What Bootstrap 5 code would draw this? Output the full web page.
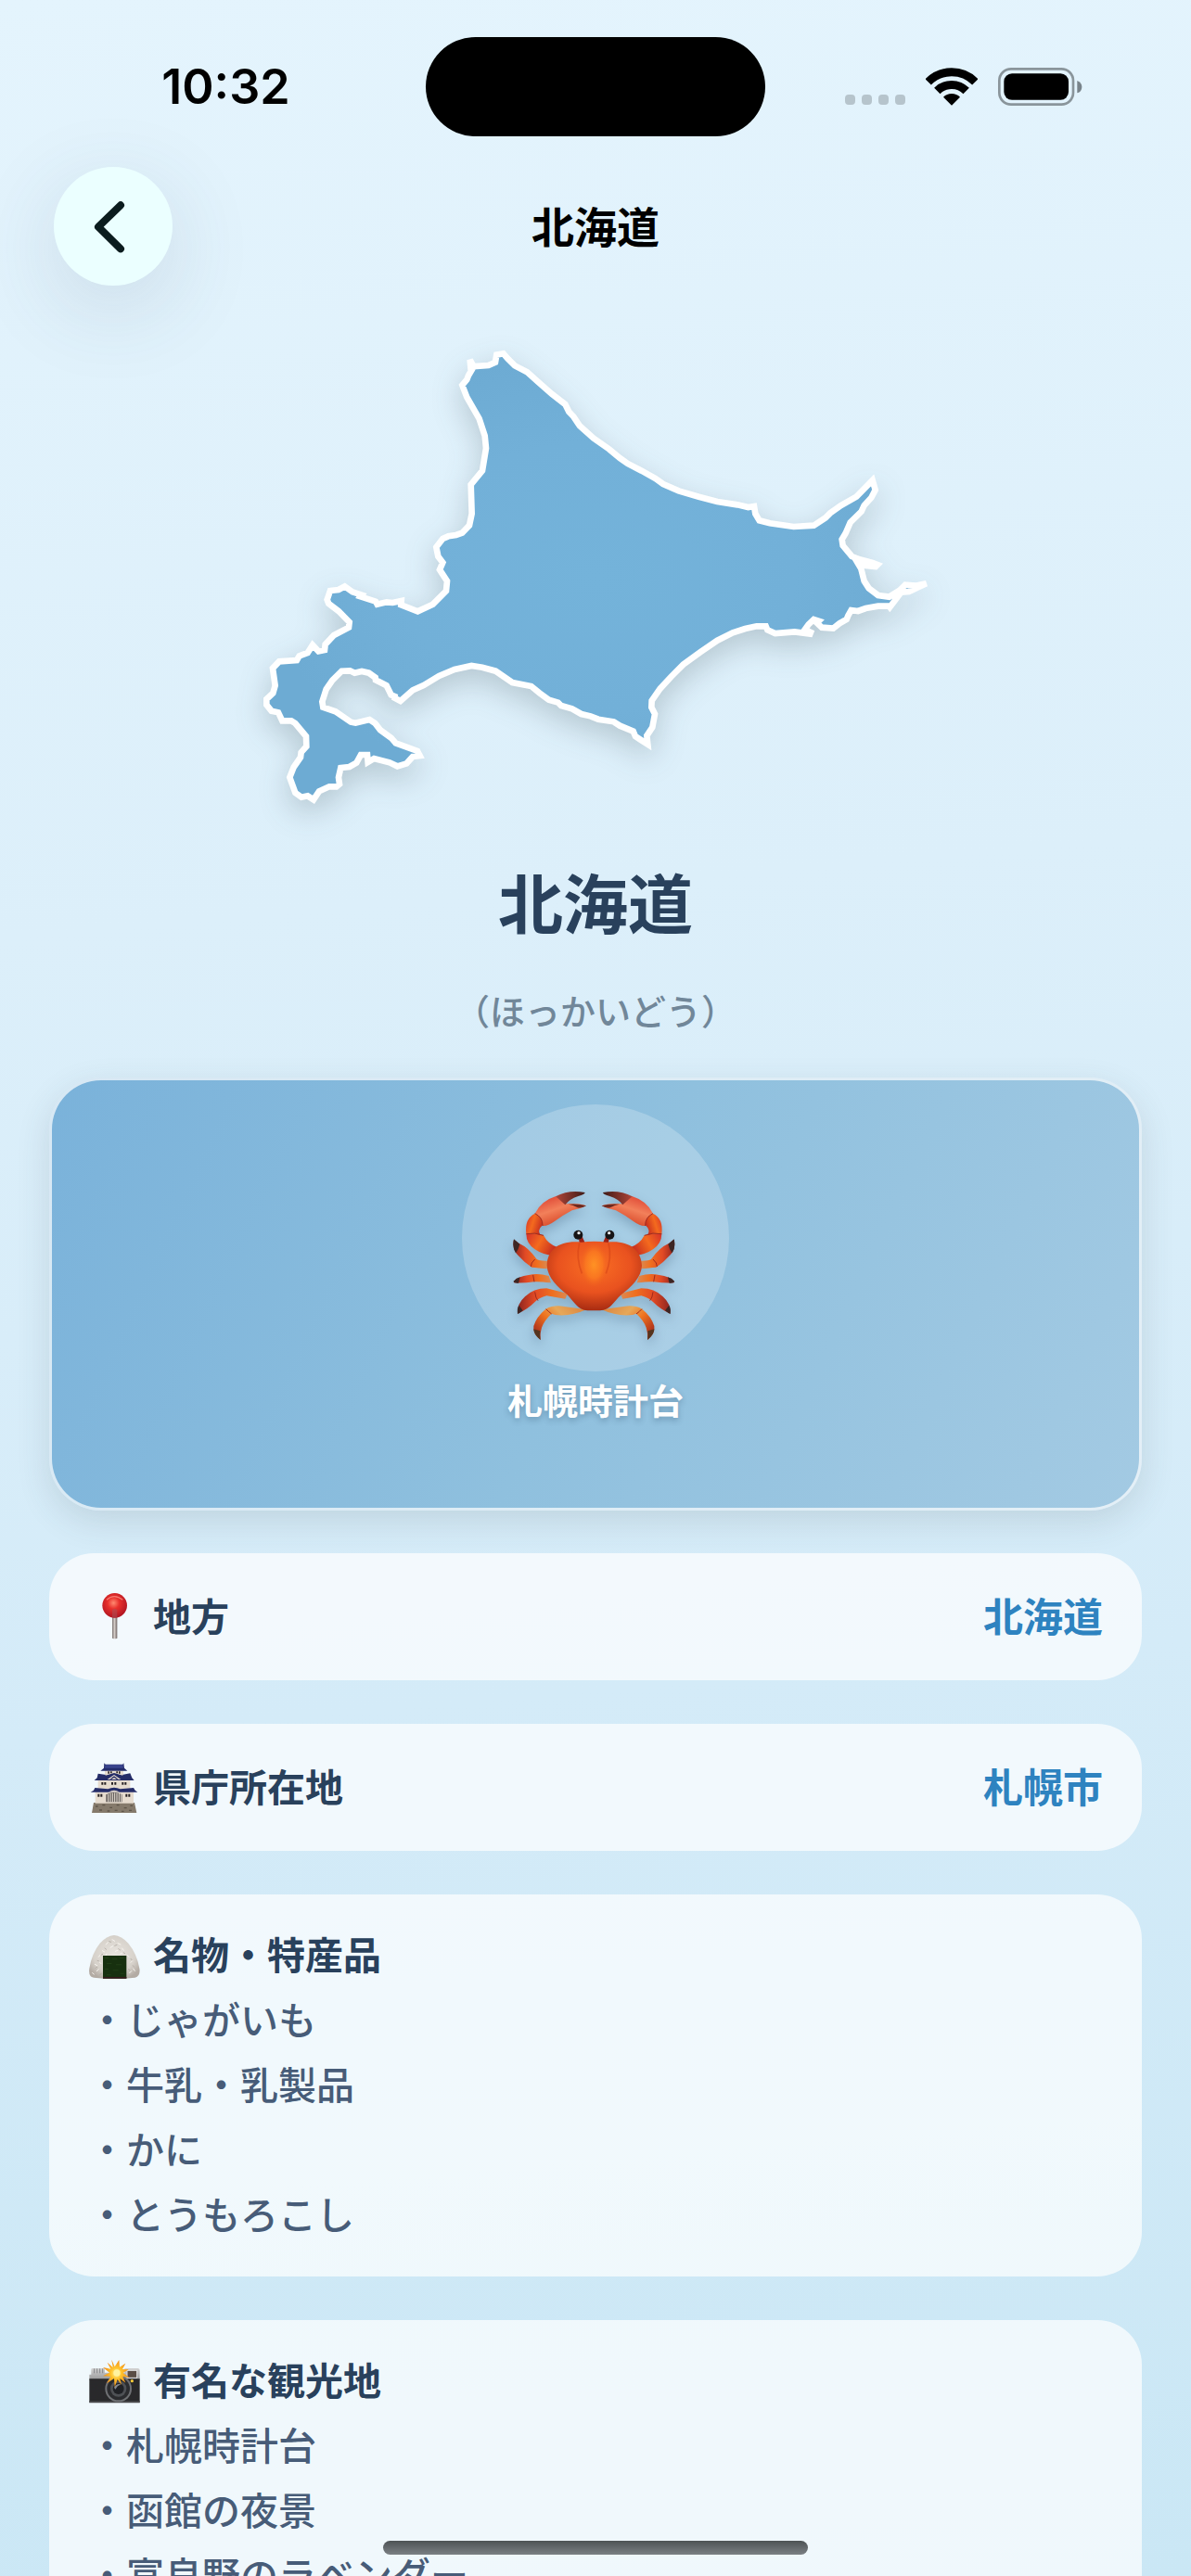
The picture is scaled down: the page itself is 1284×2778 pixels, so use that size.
<!DOCTYPE html>
<html lang="ja">
<head>
  <meta charset="UTF-8" />
  <meta name="viewport" content="width=device-width, initial-scale=1" />
  <title>北海道</title>
  <link href="https://cdn.jsdelivr.net/npm/bootstrap@5.3.0/dist/css/bootstrap.min.css" rel="stylesheet" />
  <style>
    body {
      font-family: "Noto Sans CJK JP", sans-serif;
      color: #29415c;
      background: linear-gradient(175deg, #e4f4fd 0%, #dceffa 35%, #d4ebf8 65%, #cae7f5 100%);
    }

    /* Status bar */
    .status-bar {
      padding-top: 40px;
      display: grid;
      grid-template-columns: 1fr 366px 1fr;
    }

    .clock {
      font-family: Inter, sans-serif;
      font-size: 52px;
      line-height: 56px;
      font-weight: 600;
      padding-left: 28px;
    }

    .island {
      height: 107px;
    }

    .status-icons {
      padding-right: 32px;
      gap: 22px;
    }

    .signal i {
      width: 11px;
      height: 11px;
      border-radius: 4px;
      background-color: #b6c4cc;
    }

    .signal {
      gap: 7px;
      padding-bottom: 1px;
    }

    /* Top navigation */
    .top-nav {
      margin-top: 33px;
      padding: 0 58px;
      display: grid;
      grid-template-columns: 128px 1fr 128px;
    }

    .back-btn {
      width: 128px;
      height: 128px;
      background-color: #ebffff;
      box-shadow: 0 24px 96px rgba(60, 80, 100, 0.14);
    }

    .nav-heading {
      font-size: 46px;
      line-height: 56px;
      font-weight: 600;
    }

    /* Content */
    .page-body {
      padding: 52px 53px 0;
    }

    .map-svg {
      width: 744px;
      max-width: 100%;
      overflow: visible;
      filter: drop-shadow(0 12px 16px rgba(40, 60, 70, 0.22));
    }

    .pref-name {
      margin-top: 50px;
      font-size: 70px;
      line-height: 84px;
      font-weight: 700;
    }

    .pref-kana {
      margin-top: 47px;
      margin-bottom: 45px;
      font-size: 38px;
      line-height: 56px;
      font-weight: 500;
      color: #718799;
    }

    .hero {
      min-height: 467px;
      padding-top: 26px;
      border: 3px solid rgba(255, 255, 255, 0.7);
      border-radius: 56px;
      background: linear-gradient(115deg, #7ab2da 0%, #8fc0de 50%, #a3cae3 100%) border-box;
      box-shadow: 0 12px 36px rgba(60, 70, 80, 0.14);
      color: #fff;
    }

    .hero-disc {
      width: 288px;
      height: 288px;
      background-color: rgba(255, 255, 255, 0.22);
    }

    .crab {
      filter: drop-shadow(0 6px 6px rgba(30, 60, 90, 0.25));
    }

    .hero-caption {
      font-size: 38px;
      line-height: 60px;
      font-weight: 600;
      text-shadow: 0 3px 6px rgba(30, 60, 90, 0.3);
    }

    .cards {
      margin-top: 46px;
      gap: 47px;
    }

    .info-card {
      padding: 28px 42px 34px;
      border-radius: 48px;
      background-color: rgba(255, 255, 255, 0.7);
      font-size: 41px;
      line-height: 70px;
    }

    .info-row {
      min-height: 137px;
    }

    .info-label {
      font-weight: 600;
      gap: 14px;
    }

    .info-label svg {
      margin-top: 6px;
    }

    .info-value {
      font-size: 43px;
      font-weight: 600;
      color: #2e83c0;
    }

    .info-list {
      color: #475c78;
      font-weight: 500;
    }

    .home-bar {
      left: 50%;
      bottom: 23px;
      width: 458px;
      height: 15px;
      transform: translateX(-50%);
      background: linear-gradient(#4d5355, #7b8084);
    }
  </style>
</head>
<body>

  <div class="vh-100 overflow-hidden position-relative">

    <!-- Status bar -->
    <header class="status-bar align-items-center text-black">
      <div class="text-center"><span class="clock">10:32</span></div>
      <div class="island rounded-pill bg-black"></div>
      <div class="status-icons d-flex justify-content-center align-items-end">
        <div class="signal d-flex"><i></i><i></i><i></i><i></i></div>
        <svg width="56" height="41" viewBox="0 0 168 123" fill="none" stroke="#000" aria-hidden="true">
          <path d="M8 46A107 107 0 0 1 160 46" stroke-width="27" />
          <path d="M37 75A66 66 0 0 1 131 75" stroke-width="27" />
          <path d="M57 95A38 38 0 0 1 111 95L84 122Z" fill="#000" stroke="none" />
        </svg>
        <svg width="91" height="41" viewBox="0 0 273 123" aria-hidden="true">
          <rect x="4" y="4" width="239" height="115" rx="38" fill="none" stroke="#8a959b" stroke-width="8" />
          <rect x="19" y="19" width="209" height="85" rx="26" />
          <path d="M256 42Q271 48 271 62Q271 77 256 82Z" fill="#78838a" />
        </svg>
      </div>
    </header>

    <!-- Navigation -->
    <nav class="top-nav align-items-center">
      <button type="button" class="back-btn btn border-0 rounded-circle p-0 d-flex align-items-center justify-content-center" aria-label="戻る">
        <svg width="128" height="128" viewBox="0 0 384 384" fill="none" stroke="#0b1c1e" stroke-width="24" stroke-linecap="round" stroke-linejoin="round">
          <path d="M216 124L144 194L216 265" />
        </svg>
      </button>
      <h1 class="nav-heading text-black text-center mb-0 pb-1">北海道</h1>
    </nav>

    <main class="page-body">

      <!-- Outline of Hokkaido -->
      <div class="text-center">
        <svg class="map-svg d-block mx-auto" viewBox="0 0 2232 1560" role="img" aria-label="北海道の地図">
          <defs>
            <radialGradient id="land" cx="0.5" cy="0.5" r="0.5">
              <stop offset="0" stop-color="#74b3da" />
              <stop offset="0.6" stop-color="#72b0d8" />
              <stop offset="1" stop-color="#6dabd3" />
            </radialGradient>
          </defs>
          <path fill="url(#land)" stroke="#fff" stroke-width="20" stroke-linejoin="miter" d="M722 106L710 84L712 106L770 102L792 92L796 68L818 64L832 80L855 103L895 124L930 155L975 195L1018 228L1030 252L1045 268L1065 298L1110 338L1160 373L1195 402L1220 420L1265 443L1310 468L1335 486L1385 508L1450 527L1510 543L1575 553L1610 561L1629 558L1633 582L1646 604L1680 613L1757 624L1822 620L1860 595L1875 580L1910 555L1960 527L2012 474L2021 505L2008 530L1985 555L1976 575L1940 610L1925 645L1913 665L1916 685L1945 720L1970 730L2012 741L2028 747L2022 753L1990 750L1962 738L1975 760L1985 800L2000 823L2030 846L2066 851L2100 830L2118 812L2150 815L2186 808L2155 822L2130 834L2104 836L2085 862L2068 884L2065 880L2030 881L1990 888L1965 897L1943 894L1933 912L1928 924L1905 937L1885 953L1848 950L1832 935L1838 929L1822 924L1805 940L1793 957L1812 966L1810 971L1760 964L1697 969L1672 958L1667 946L1637 946L1600 954L1560 967L1510 992L1455 1030L1400 1070L1360 1110L1325 1148L1298 1187L1297 1208L1308 1230L1300 1273L1282 1300L1285 1328L1260 1312L1245 1302L1238 1286L1195 1268L1175 1255L1125 1247L1100 1237L1070 1230L1040 1213L1005 1203L995 1193L965 1184L935 1162L908 1140L847 1128L793 1091L750 1079L715 1074L660 1086L610 1107L560 1137L525 1153L485 1188L460 1175L474 1176L455 1168L440 1138L405 1120L404 1112L383 1097L360 1092L337 1097L322 1090L295 1091L265 1121L245 1150L232 1190L235 1208L275 1222L325 1256L340 1259L385 1248L403 1260L420 1282L455 1307L470 1324L540 1350L548 1365L525 1368L505 1390L475 1399L450 1387L400 1374L380 1386L378 1362L357 1362L343 1388L320 1401L292 1404L285 1435L288 1457L278 1465L255 1465L222 1480L204 1507L185 1495L165 1499L145 1485L127 1435L140 1402L162 1370L164 1354L181 1335L180 1302L145 1260L132 1252L103 1252L90 1225L68 1220L52 1200L52 1182L73 1162L80 1138L72 1082L93 1060L150 1056L158 1042L185 1032L201 1007L220 1027L240 1023L242 1005L270 975L318 950L320 933L285 897L253 873L248 860L258 831L285 828L305 817L330 835L360 845L356 850L405 866L410 875L440 868L460 870L488 864L487 877L541 898L590 875L633 832L636 800L612 763L622 740L607 720L601 690L622 663L640 655L665 651L685 644L708 620L716 582L713 488L750 443L762 370L758 330L740 275L700 205L685 166L700 148L705 135Z" />
        </svg>
      </div>

      <h2 class="pref-name text-center mb-0">北海道</h2>
      <p class="pref-kana text-center">（ほっかいどう）</p>

      <!-- Landmark -->
      <section class="hero d-flex flex-column align-items-center">
        <div class="hero-disc rounded-circle">
          <svg class="crab" width="288" height="288" viewBox="54 93 864 864" role="img" aria-label="かに">
            <defs>
              <radialGradient id="shell" cx="0.5" cy="0.35" r="0.65">
                <stop offset="0" stop-color="#fa6f24" />
                <stop offset="0.6" stop-color="#e9521f" />
                <stop offset="1" stop-color="#a82c12" />
              </radialGradient>
              <radialGradient id="ridge">
                <stop offset="0" stop-color="#ff9224" />
                <stop offset="0.6" stop-color="#fb7a20" stop-opacity="0.8" />
                <stop offset="1" stop-color="#ee5e1c" stop-opacity="0" />
              </radialGradient>
              <linearGradient id="claw" x1="0" y1="0" x2="0.6" y2="1">
                <stop offset="0" stop-color="#d9352a" />
                <stop offset="0.5" stop-color="#f2805a" />
                <stop offset="1" stop-color="#d23a1c" />
              </linearGradient>
              <linearGradient id="joint" x1="0" y1="0" x2="1" y2="0.4">
                <stop offset="0" stop-color="#d4302a" />
                <stop offset="0.5" stop-color="#f46a1e" />
                <stop offset="1" stop-color="#c8301f" />
              </linearGradient>
              <linearGradient id="tip" x1="0" y1="0" x2="1" y2="0">
                <stop offset="0" stop-color="#b04538" />
                <stop offset="1" stop-color="#3f1a17" />
              </linearGradient>
              <linearGradient id="leg" x1="0" y1="0" x2="1" y2="0">
                <stop offset="0" stop-color="#8c2420" />
                <stop offset="0.35" stop-color="#e24a25" />
                <stop offset="0.7" stop-color="#f0701f" />
                <stop offset="1" stop-color="#d98a55" />
              </linearGradient>
              <linearGradient id="backleg" x1="0" y1="0.6" x2="1" y2="0">
                <stop offset="0" stop-color="#b4381c" />
                <stop offset="0.3" stop-color="#ef7420" />
                <stop offset="0.55" stop-color="#e6a85a" />
                <stop offset="1" stop-color="#d9803c" />
              </linearGradient>
              <g id="crab-half">
                <path fill="url(#leg)" d="M222 530Q215 560 234 580Q255 604 280 620Q300 622 332 625L330 599Q306 600 296 594Q270 556 238 542Z" />
                <path fill="#3d2624" d="M222 529Q216 556 228 574Q238 560 241 545Z" />
                <path fill="url(#leg)" d="M222 665Q235 650 270 645Q300 638 335 648L342 670Q300 665 288 667Q250 672 222 670Z" />
                <path fill="#3d2624" d="M220 666Q230 654 242 652L237 671Q225 672 220 666Z" />
                <path fill="url(#leg)" d="M234 770Q232 738 258 715Q285 688 328 688L396 705L388 722L328 712Q304 718 290 732Q264 758 234 770Z" />
                <path fill="#3d2624" d="M234 771Q232 752 238 743L251 760Q242 768 234 771Z" />
                <path fill="url(#backleg)" d="M308 855Q282 834 286 810Q295 780 325 755Q350 742 380 746L456 757Q406 780 356 774L344 770Q320 792 312 815Q305 835 308 855Z" />
                <path fill="#55351f" d="M308 855Q286 838 286 820L307 826Q305 842 308 855Z" />
                <path fill="url(#joint)" d="M262 512Q262 542 290 562Q316 580 350 582L364 556Q332 545 318 517Q290 508 262 512Z" />
                <path fill="url(#joint)" d="M262 512Q256 462 290 446Q316 456 316 482Q296 500 308 516Q285 508 262 512Z" />
                <path fill="url(#claw)" d="M290 446Q310 405 358 390L388 415Q430 412 456 421Q435 432 410 436Q380 452 355 470Q330 488 315 486Q316 456 290 446Z" />
                <path fill="url(#tip)" d="M357 391Q400 368 452 378Q452 384 430 390Q400 400 388 418Q375 406 357 391Z" />
                <path fill="#6d2a20" d="M398 416Q432 413 456 421Q440 430 428 427Q414 418 398 416Z" />
                <path fill="none" stroke="#a02a1c" stroke-width="3" d="M290 446Q316 458 315 486M262 512Q290 506 318 517M290 594Q276 606 277 618M284 645L288 667M290 700Q292 720 300 728M326 755Q332 762 344 771" />
                <path fill="#9c2218" d="M432 524L442 518L452 541L434 543Z" />
                <circle cx="430" cy="515" r="15" fill="#171415" />
                <circle cx="432" cy="509" r="5" fill="#e8e8e8" />
              </g>
            </defs>
            <use href="#crab-half" />
            <use href="#crab-half" transform="translate(962 0) scale(-1 1)" />
            <path fill="url(#shell)" d="M329 615C330 560 372 532 440 539Q481 534 524 539C590 532 634 560 636 615C634 655 600 684 570 708C545 730 535 759 500 760L460 760C430 759 415 730 394 708C365 684 331 655 329 615Z" />
            <ellipse cx="481" cy="612" rx="46" ry="74" fill="url(#ridge)" />
            <path fill="none" stroke="#cf3d14" stroke-width="5" opacity="0.5" d="M434 541Q422 590 442 640M528 541Q540 590 520 640" />
          </svg>
        </div>
        <div class="hero-caption">札幌時計台</div>
      </section>

      <div class="cards d-flex flex-column">

        <div class="info-card info-row d-flex justify-content-between align-items-center">
          <div class="info-label d-flex align-items-center">
            <!-- Round pushpin -->
            <svg width="56" height="56" viewBox="0 0 168 168" aria-hidden="true">
              <defs>
                <radialGradient id="pin" cx="0.45" cy="0.4" r="0.6">
                  <stop offset="0" stop-color="#ff8a70" />
                  <stop offset="0.4" stop-color="#e8302c" />
                  <stop offset="1" stop-color="#b01522" />
                </radialGradient>
                <linearGradient id="needle">
                  <stop offset="0" stop-color="#77706e" />
                  <stop offset="0.45" stop-color="#d6cfca" />
                  <stop offset="1" stop-color="#6d6260" />
                </linearGradient>
              </defs>
              <path fill="url(#needle)" d="M78 70H94V152Q86 156 78 152Z" />
              <circle cx="86" cy="46" r="40" fill="url(#pin)" />
              <path fill="#a3535a" opacity="0.5" d="M78 60Q86 54 94 60V85H78Z" />
              <path fill="none" stroke="#ff9d90" stroke-width="4" opacity="0.7" d="M60 28Q84 6 112 28" />
            </svg>
            地方
          </div>
          <div class="info-value">北海道</div>
        </div>

        <div class="info-card info-row d-flex justify-content-between align-items-center">
          <div class="info-label d-flex align-items-center">
            <!-- Castle -->
            <svg width="56" height="56" viewBox="0 0 168 168" aria-hidden="true">
              <path fill="#857a6b" d="M18 132H150L157 165H12Z" />
              <path fill="#5f5649" d="M24 142h8v4h-8zM46 138h9v4h-9zM70 146h8v4h-8zM92 138h9v4h-9zM116 147h9v4h-9zM136 140h8v4h-8zM36 154h9v4h-9zM62 157h8v4h-8zM86 155h9v4h-9zM108 158h8v4h-8zM132 155h9v4h-9z" />
              <path fill="#e6dccf" d="M23 97H147V134H23ZM32 56H136V90H32ZM54 28H114V50H54Z" />
              <path fill="#232c6b" d="M52 4L56 8H112L115 4L117 20L127 29H40L51 20Z" />
              <path fill="#39448c" d="M56 9H112L114 20H53Z" />
              <path fill="#252d68" d="M32 38L58 42L84 34L110 42L136 37L142 52L149 60H20L29 52Z" />
              <path fill="#e6dccf" d="M56 30H112V44L84 36L56 44ZM84 42L106 57H62Z" />
              <path fill="#232a62" d="M84 46L98 56H92L84 51L76 56H70Z" />
              <path fill="#252d68" d="M22 84L64 88Q84 78 104 88L147 84L152 92L160 98H8L18 92Z" />
              <path fill="#e0d6c9" d="M66 98Q84 86 102 98Z" />
              <path fill="#2a2426" d="M64 31h5v7h-5zM72 31h5v6h-5zM91 31h5v6h-5zM99 31h5v7h-5zM43 66h6v8h-6zM52 66h6v8h-6zM75 66h6v8h-6zM85 66h6v8h-6zM109 66h6v8h-6zM118 66h6v8h-6zM31 104h6v9h-6zM40 104h6v9h-6zM121 104h6v9h-6zM130 104h6v9h-6z" />
              <path fill="#655f5c" d="M58 106Q84 92 110 106V130H58Z" />
              <path fill="none" stroke="#e9e1d6" stroke-width="3" d="M65 104V130M72 102V130M79 101V130M86 100V130M93 101V130M100 102V130M107 104V130" />
            </svg>
            県庁所在地
          </div>
          <div class="info-value">札幌市</div>
        </div>

        <div class="info-card">
          <div class="info-label d-flex align-items-center">
            <!-- Rice ball -->
            <svg width="56" height="56" viewBox="0 0 168 168" aria-hidden="true">
              <defs>
                <radialGradient id="rice" cx="0.5" cy="0.45" r="0.6">
                  <stop offset="0" stop-color="#e9e5df" />
                  <stop offset="0.7" stop-color="#d6d1ca" />
                  <stop offset="1" stop-color="#b3aba3" />
                </radialGradient>
              </defs>
              <path fill="url(#rice)" d="M84 18Q108 20 130 44Q158 78 166 125Q170 150 152 155Q84 162 18 155Q0 152 4 125Q12 76 38 44Q60 20 84 18Z" />
              <path fill="none" stroke="#f7f4ef" stroke-width="3" stroke-linecap="round" d="M78 32l8 5M58 48l6-7M96 44l9 4M72 58l8-5M110 60l5 7M46 68l7 4M88 70l8-3M34 88l6-7M60 78l-4 7M126 82l6 6M22 112l7 4M36 104l6 6M28 134l6-6M138 106l6-6M146 126l5 7M134 140l6-6M14 140l5 4M104 78l7-3" />
              <path fill="none" stroke="#a8a098" stroke-width="2" stroke-linecap="round" d="M68 38l6 2M86 52l7-3M54 60l5 4M98 62l6 4M42 82l5-3M114 74l5 3M30 100l5 2M138 94l4 5M24 124l5-3M144 116l4 3M38 146l5-4M130 128l5 3" />
              <path fill="#17300f" d="M48 84H124V158H48Z" />
              <path fill="#26451a" opacity="0.7" d="M54 90h12v3h-12zM78 94h16v3h-16zM102 90h14v3h-14zM60 108h16v3h-16zM90 112h18v3h-18zM54 126h12v3h-12zM80 130h18v3h-18zM104 140h12v3h-12zM60 145h14v3h-14z" />
              <path fill="#33191a" d="M48 153H124V158H48Z" />
            </svg>
            名物・特産品
          </div>
          <ul class="info-list list-unstyled mb-0">
            <li>・じゃがいも</li>
            <li>・牛乳・乳製品</li>
            <li>・かに</li>
            <li>・とうもろこし</li>
          </ul>
        </div>

        <div class="info-card">
          <div class="info-label d-flex align-items-center">
            <!-- Camera with flash -->
            <svg width="56" height="56" viewBox="0 0 168 168" aria-hidden="true">
              <defs>
                <linearGradient id="metal" x1="0" y1="0" x2="0" y2="1">
                  <stop offset="0" stop-color="#d2d2d2" />
                  <stop offset="1" stop-color="#98999a" />
                </linearGradient>
                <radialGradient id="flash">
                  <stop offset="0" stop-color="#fff6a0" />
                  <stop offset="0.4" stop-color="#ffc42e" />
                  <stop offset="1" stop-color="#f28a12" />
                </radialGradient>
              </defs>
              <path fill="url(#metal)" d="M10 46Q10 42 15 42H54V56H118V42H160Q167 42 167 50V80H4V62H10Z" />
              <path fill="none" stroke="#84868a" stroke-width="3" d="M20 43V58M29 43V58M38 43V58M47 43V58" />
              <rect x="126" y="49" width="32" height="24" fill="#5a4d45" stroke="#e4e4e4" stroke-width="3" />
              <path fill="#29292b" d="M4 76H167V152H4Z" />
              <path fill="#4a4a4c" d="M4 148H167V154H4Z" />
              <circle cx="98" cy="108" r="43" fill="#6f7174" />
              <circle cx="98" cy="108" r="37" fill="#2b2c2f" />
              <circle cx="98" cy="108" r="26" fill="#4e5155" />
              <circle cx="98" cy="108" r="18" fill="#202226" />
              <path fill="#85898e" d="M84 104Q92 90 106 94Q94 98 88 110Z" />
              <circle cx="142" cy="83" r="5" fill="#f4c93a" />
              <path fill="url(#flash)" d="M76 14L86 37L100 15L102 38L121 26L111 45L131 46L113 57L134 72L112 68L121 89L103 75L108 96L95 78L86 103L84 75L60 91L73 68L48 67L69 56L48 39L73 44L62 23L80 39Z" />
              <circle cx="93" cy="57" r="11" fill="#fff3a0" />
            </svg>
            有名な観光地
          </div>
          <ul class="info-list list-unstyled mb-0">
            <li>・札幌時計台</li>
            <li>・函館の夜景</li>
            <li>・富良野のラベンダー</li>
          </ul>
        </div>

      </div>
    </main>

    <div class="home-bar position-absolute rounded-pill"></div>
  </div>

  <script src="https://cdn.jsdelivr.net/npm/bootstrap@5.3.0/dist/js/bootstrap.bundle.min.js"></script>
</body>
</html>
